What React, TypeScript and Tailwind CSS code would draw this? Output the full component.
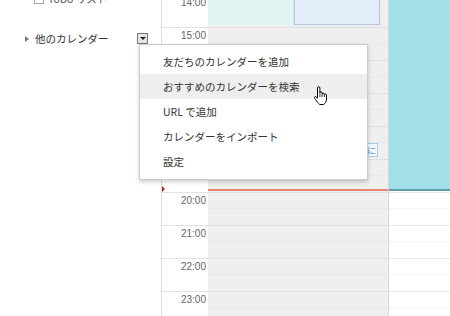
const hours = ['14:00', '15:00', '16:00', '17:00', '18:00', '19:00', '20:00', '21:00', '22:00', '23:00']

const menuItems = [
    '友だちのカレンダーを追加',
    'おすすめのカレンダーを検索',
    'URL で追加',
    'カレンダーをインポート',
    '設定',
]

const HandCursor = () => (
    <svg width="16" height="20" viewBox="0 0 16 20">
        <path
            d="M4.5 2C4.5 1.2 5 .7 5.7 .7S6.9 1.2 6.9 2V7C6.9 6.3 7.4 5.9 8 5.9S9.1 6.3 9.1 7V8.2C9.1 7.5 9.6 7.1 10.2 7.1S11.3 7.5 11.3 8.2V9C11.3 8.4 11.8 8 12.4 8S13.5 8.4 13.5 9.1V13C13.5 15.5 12.3 17.4 10.6 18.5H6.6C5.5 17.5 4 15.5 2.6 13.6 1.8 12.5 1.2 11.6 1.6 11 2 10.3 3 10.5 3.6 11.2L4.5 12.3Z"
            fill="white"
            stroke="black"
            strokeWidth="1"
            strokeLinejoin="round"
        />
        <path d="M6.9 7.5V11M9.1 8.2V11M11.3 9V11" stroke="black" strokeWidth="0.8" fill="none" />
    </svg>
)

export default function App() {
    return (
        <div className="relative h-[316px] w-[450px] overflow-hidden bg-white font-['Noto_Sans_CJK_JP',sans-serif] text-[#333]">
            <div className="flex h-full">
                {/* sidebar */}
                <aside className="w-[161px] shrink-0">
                    <div className="-mt-[7px] flex h-[12px] items-center gap-[4px] pl-[34px]">
                        <span className="h-[10px] w-[10px] border border-[#aaa] bg-white"></span>
                        <span className="text-[10.5px] leading-none text-[#555]">ToDo リスト</span>
                    </div>
                    <div className="mt-[28px] flex h-[12px] items-center pl-[25px] pr-[13px]">
                        <span className="h-0 w-0 border-y-[3px] border-l-[4px] border-y-transparent border-l-[#777]"></span>
                        <span className="ml-[6px] text-[10.5px] leading-none text-[#333]">他のカレンダー</span>
                        <span className="ml-auto -mt-[2px] flex h-[11px] w-[11px] items-center justify-center border border-[#777] bg-[#e4e4e4]">
                            <span className="h-0 w-0 border-x-[3px] border-t-[3px] border-x-transparent border-t-[#222]"></span>
                        </span>
                    </div>
                </aside>

                {/* grid */}
                <div className="flex-1 overflow-hidden">
                    <div className="-mt-[6px] flex">
                        {/* time gutter */}
                        <div className="relative w-[47px] shrink-0 border-l border-[#ddd]">
                            {hours.map((h) => (
                                <div key={h} className="h-[33px] border-t border-[#e3e3e3] pr-[2px] text-right font-['Liberation_Sans',sans-serif] text-[10px] text-[#666]">
                                    {h}
                                </div>
                            ))}
                            <span className="absolute left-0 top-[192px] h-0 w-0 border-y-[3px] border-l-[3px] border-y-transparent border-l-[#b3261e]"></span>
                        </div>

                        {/* today column */}
                        <div className="relative w-[180px] shrink-0 bg-[#efefef]">
                            {hours.map((h) => (
                                <div key={h} className="h-[33px] border-t border-[#e0e0e0]">
                                    <div className="h-[16px] border-b border-[#e8e8e8]"></div>
                                </div>
                            ))}
                            <div className="absolute left-0 top-0 h-[31px] w-[86px] border-r border-[#d5e6e6] bg-[#e1f5f5]"></div>
                            <div className="absolute left-[86px] top-0 h-[31px] w-[86px] border border-[#b7c6db] bg-[#e4eefa]"></div>
                            <div className="absolute left-[150px] top-[149px] flex h-[14px] w-[20px] items-center justify-end border border-[#a8cbe6] bg-[#f3f8fc] pr-[1px] text-[9px] leading-none text-[#5b8fc0]">
                                に
                            </div>
                            <div className="absolute left-0 right-0 top-[195px] h-[2px] bg-[#e88474]"></div>
                        </div>

                        {/* next column */}
                        <div className="relative flex-1 border-l border-[#d8d8d8] bg-white">
                            {hours.map((h) => (
                                <div key={h} className="h-[33px] border-t border-[#e6e6e6]">
                                    <div className="h-[16px] border-b border-dotted border-[#eee]"></div>
                                </div>
                            ))}
                            <div className="absolute left-0 right-0 top-0 h-[197px] border-b-[2px] border-[#5a9ea8] bg-[#a3dfe8]"></div>
                        </div>
                    </div>
                </div>
            </div>

            {/* dropdown menu */}
            <div className="absolute left-[139px] top-[44px] w-[229px] border border-[#ccc] bg-white pb-[5px] pt-[4px] shadow-[0_2px_4px_rgba(0,0,0,0.2)]">
                {menuItems.map((item, i) => (
                    <div
                        key={item}
                        className={`flex h-[25px] items-center pl-[23px] text-[10.5px] text-[#333] ${i === 1 ? 'bg-[#eeeeee]' : ''}`}
                    >
                        {item}
                    </div>
                ))}
            </div>

            <div className="absolute left-[313px] top-[86px]">
                <HandCursor />
            </div>
        </div>
    )
}
